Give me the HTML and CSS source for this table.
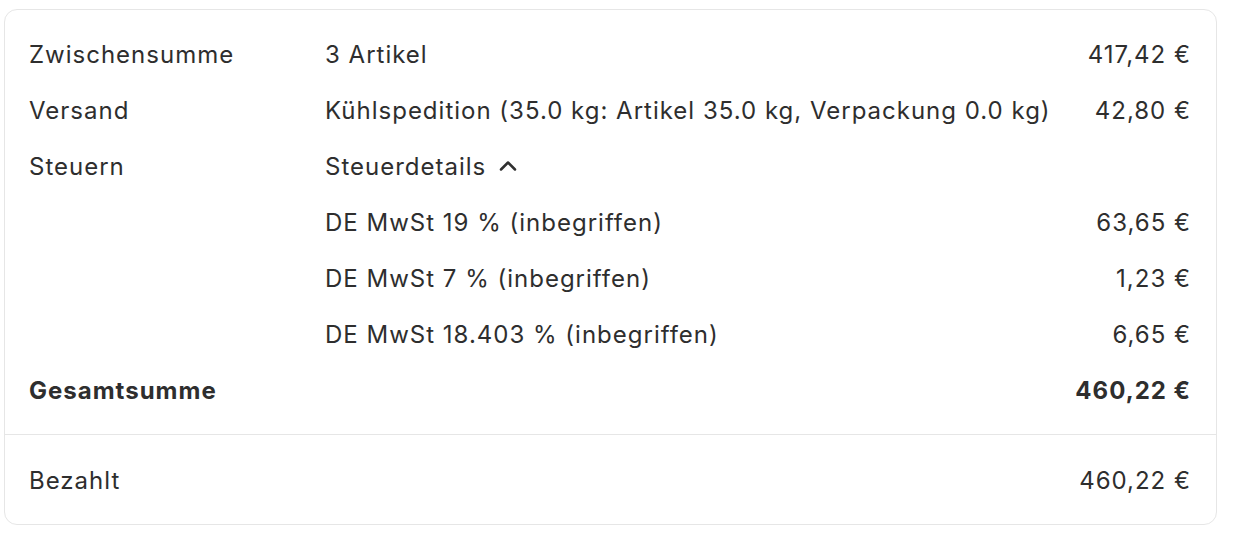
FILE: index.html
```html
<!DOCTYPE html>
<html lang="de">
<head>
<meta charset="utf-8">
<link rel="stylesheet" href="styles.css">
</head>
<body>
<div class="page">
  <section class="card">
    <div class="section">
      <div class="row">
        <span class="label">Zwischensumme</span>
        <span class="detail">3 Artikel</span>
        <span class="amount">417,42 €</span>
      </div>
      <div class="row">
        <span class="label">Versand</span>
        <span class="detail">Kühlspedition (35.0 kg: Artikel 35.0 kg, Verpackung 0.0 kg)</span>
        <span class="amount">42,80 €</span>
      </div>
      <div class="row">
        <span class="label">Steuern</span>
        <span class="detail toggle">Steuerdetails
          <svg class="chev" width="24" height="24" viewBox="0 0 24 24" aria-hidden="true"><path d="M5 15.5 L12 8.5 L19 15.5" fill="none" stroke="#303030" stroke-width="2.5" stroke-linecap="round" stroke-linejoin="round"/></svg>
        </span>
        <span class="amount"></span>
      </div>
      <div class="row">
        <span class="label"></span>
        <span class="detail">DE MwSt 19 % (inbegriffen)</span>
        <span class="amount">63,65 €</span>
      </div>
      <div class="row">
        <span class="label"></span>
        <span class="detail">DE MwSt 7 % (inbegriffen)</span>
        <span class="amount">1,23 €</span>
      </div>
      <div class="row">
        <span class="label"></span>
        <span class="detail">DE MwSt 18.403 % (inbegriffen)</span>
        <span class="amount">6,65 €</span>
      </div>
      <div class="row total">
        <span class="label">Gesamtsumme</span>
        <span class="detail"></span>
        <span class="amount">460,22 €</span>
      </div>
    </div>
    <div class="section paid">
      <div class="row">
        <span class="label">Bezahlt</span>
        <span class="detail"></span>
        <span class="amount">460,22 €</span>
      </div>
    </div>
  </section>
</div>
</body>
</html>
```

FILE: styles.css
```css
* { box-sizing: border-box; }
html, body { margin: 0; padding: 0; background: #ffffff; }
body {
  font-family: Inter, "Noto Sans", "Liberation Sans", sans-serif;
  color: #2e2e2e;
  font-size: 24px;
  letter-spacing: 1px;
}
.page {
  padding: 9px 25px 0 4px;
}
.card {
  border: 1px solid #e6e6e6;
  border-radius: 13px;
  background: #ffffff;
}
.section {
  padding: 16px 25px 16px 24px;
}
.section.paid {
  border-top: 1px solid #e6e6e6;
  padding-top: 17px;
  padding-bottom: 16px;
}
.row {
  display: grid;
  grid-template-columns: 296px 1fr auto;
  align-items: center;
  height: 56px;
}
.label, .detail { white-space: nowrap; }
.amount { text-align: right; white-space: nowrap; }
.toggle {
  display: inline-flex;
  align-items: center;
  gap: 10px;
}
.chev { display: block; }
.total { font-weight: 650; }
```
